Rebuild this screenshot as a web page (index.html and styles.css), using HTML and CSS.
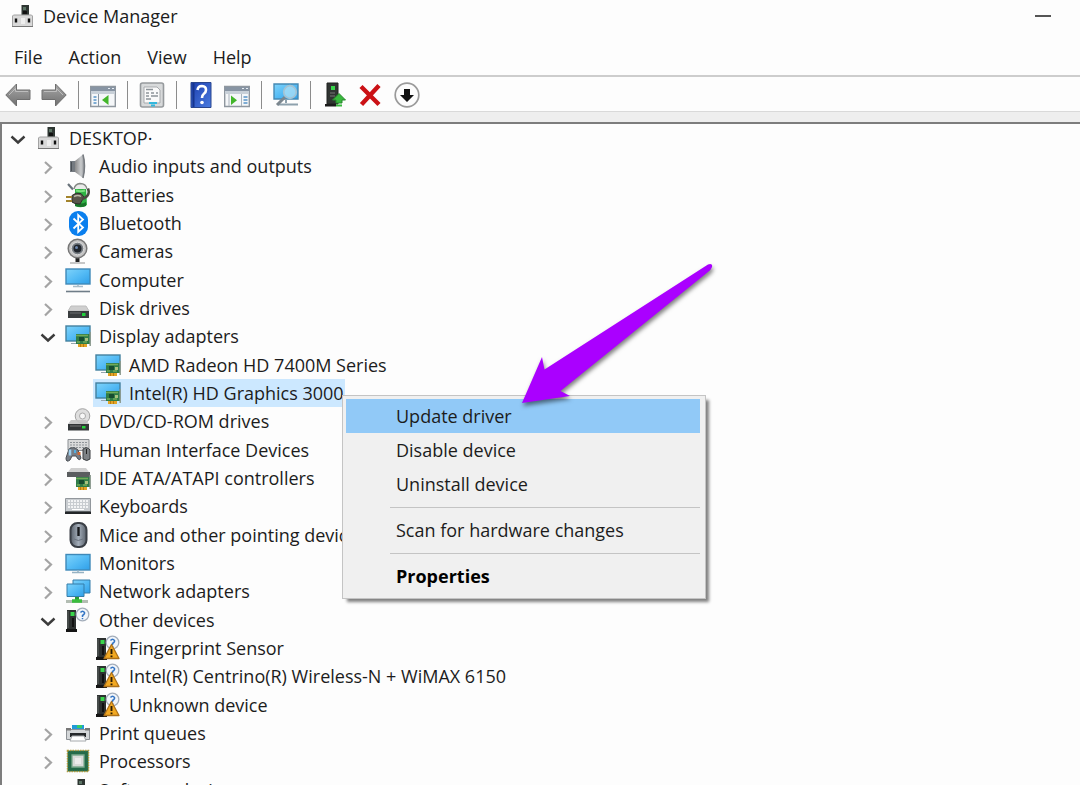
FILE: index.html
```html
<!DOCTYPE html>
<html lang="en">
<head>
<meta charset="utf-8">
<title>Device Manager</title>
<link rel="stylesheet" href="styles.css">
</head>
<body>
<svg class="defs" aria-hidden="true">
  <defs>
    <linearGradient id="g-screen" x1="0" y1="0" x2="1" y2="1"><stop offset="0" stop-color="#7fd3fa"/><stop offset=".5" stop-color="#54bbf5"/><stop offset="1" stop-color="#2f9fe8"/></linearGradient>
    <linearGradient id="g-cone" x1="0" y1="0" x2="1" y2="0"><stop offset="0" stop-color="#8a8a8a"/><stop offset=".6" stop-color="#c9cbcd"/><stop offset="1" stop-color="#85898d"/></linearGradient>
    <linearGradient id="g-arrow" x1="0" y1="0" x2="0" y2="1"><stop offset="0" stop-color="#a8a8a8"/><stop offset="1" stop-color="#6f6f6f"/></linearGradient>
    <linearGradient id="g-help" x1="0" y1="0" x2="1" y2="1"><stop offset="0" stop-color="#1d3fae"/><stop offset="1" stop-color="#4a7be0"/></linearGradient>
    <linearGradient id="g-mouse" x1="0" y1="0" x2="1" y2="0"><stop offset="0" stop-color="#59616b"/><stop offset=".5" stop-color="#a3adb9"/><stop offset="1" stop-color="#59616b"/></linearGradient>

    <symbol id="i-root" viewBox="0 0 26 26">
      <path d="M12.500 2h7.500v12h-7.500z" fill="#2e3632"/><path d="M14 4h3v3h-3z" fill="#5c7465"/><path d="M14 8h4v3h-4z" fill="#111"/>
      <path d="M3.500 13l1-1h18l1 1v10.500h-20z" fill="#d9d9d9" stroke="#a3a3a3"/>
      <path d="M3 23.500h21" stroke="#777"/>
      <path d="M7 15.500v4M20 15.500v4" stroke="#111" stroke-width="2.400"/><path d="M12 15h4v6h-4z" fill="#eee"/>
    </symbol>
    <symbol id="i-audio" viewBox="0 0 26 26">
      <path d="M5 8h5v11H5z" fill="#747a80"/><path d="M6.500 9v9" stroke="#4b5157"/>
      <path d="M10 8l8-6.500q4 11.500 0 23.500L10 19z" fill="url(#g-cone)"/><path d="M18 1.500q3 11.500 0 23.500" fill="none" stroke="#777b80" stroke-width="1.500"/>
    </symbol>
    <symbol id="i-battery" viewBox="0 0 26 26">
      <path d="M10 5q5-4 11 0l1 18q-5 4-12 1z" fill="#2fb344"/><path d="M10 20q6 3 11 0v4q-5 2-11 0z" fill="#187529"/>
      <path d="M9 7q1-5 6-5.500Q21 1.500 22 7" fill="#e9ebe9" stroke="#858985" stroke-width="1.300"/><path d="M11 8.500q5 1.500 9 0" stroke="#7be07d" stroke-width="2" fill="none"/>
      <path d="M3 2l5 5.500" stroke="#69727a" stroke-width="2.200"/>
      <path d="M7 13.500q4-3.500 9-2l3 3.500-4 7q-6 0-8-2z" fill="#59564b" stroke="#2f302b"/><path d="M17 17q9-3 6-10.500" fill="none" stroke="#4b4a42" stroke-width="2.500"/>
      <path d="M9 14.500q4-2 7 0" stroke="#bbb9a8" fill="none" stroke-width="1.500"/>
      <path d="M1 15h6M1 19h6" stroke="#a3842c" stroke-width="2.200"/>
    </symbol>
    <symbol id="i-bluetooth" viewBox="0 0 26 26">
      <rect x="4" y="1" width="19" height="25" rx="9" fill="#0a7fee"/>
      <path d="M8.500 8.500l9.500 9-4.800 4.500V5l4.800 4.500-9.500 9" fill="none" stroke="#fff" stroke-width="1.800"/>
    </symbol>
    <symbol id="i-camera" viewBox="0 0 26 26">
      <path d="M5 25h15" stroke="#b5b5b5" stroke-width="1.500"/><path d="M12.500 19v5" stroke="#222" stroke-width="4"/>
      <circle cx="12.500" cy="10.500" r="9.300" fill="#c4c4c4" stroke="#777" stroke-width="1.500"/><circle cx="12.500" cy="10.500" r="6.300" fill="#777d83" stroke="#dcdcdc"/>
      <circle cx="12.500" cy="10.500" r="4" fill="#20252c"/><circle cx="11.500" cy="9.500" r="1.500" fill="#6c86ac"/>
    </symbol>
    <symbol id="i-computer" viewBox="0 0 26 26">
      <rect x="1" y="2" width="24" height="15" fill="url(#g-screen)" stroke="#3f89b8" stroke-width="1.400"/>
      <path d="M13 18v2M8 19.500h10" stroke="#a9bdc9" stroke-width="1.600"/><path d="M1 24.500h24" stroke="#6f7d88" stroke-width="1.600"/>
    </symbol>
    <symbol id="i-disk" viewBox="0 0 26 26">
      <path d="M6 11h15l3 5H3z" fill="#cfcfcf" stroke="#bdbdbd"/><path d="M3 16h21v7H3z" fill="#3a3d3f"/><path d="M5 18h11" stroke="#6b6f70"/><path d="M17 18h3.500v3H17z" fill="#21d13c"/>
    </symbol>
    <symbol id="i-card" viewBox="0 0 26 26">
      <path d="M11 10h14v10H11z" fill="#2f7d48"/><path d="M25.200 8v14" stroke="#8c9a8f" stroke-width="1.500"/>
      <path d="M11 11.500h12M12 18h3M18 18h4" stroke="#73a957" stroke-width="1.400"/><path d="M14 13h5v4h-5z" fill="#174c30"/><path d="M20 14h3v3h-3z" fill="#a8c17d"/>
      <path d="M13 20h9v3h-9z" fill="#e3a526"/><path d="M15.500 20v3M18.500 20v3" stroke="#b67b13"/>
    </symbol>
    <symbol id="i-display" viewBox="0 0 26 26">
      <rect x="1" y="3" width="24" height="15" fill="url(#g-screen)" stroke="#43809f" stroke-width="1.400"/><path d="M6 20.500h7" stroke="#97a6af"/><use href="#i-card" y="1" width="26" height="26"/>
    </symbol>
    <symbol id="i-dvd" viewBox="0 0 26 26">
      <circle cx="17.500" cy="8" r="7.300" fill="#dedede" stroke="#a2a2a2"/><circle cx="17.500" cy="8" r="3" fill="#f7f7f7" stroke="#aaa"/>
      <path d="M6 12h15l3 4H3z" fill="#c3c3c3" opacity=".9"/><path d="M3 16h21v6.500H3z" fill="#333638"/><path d="M5 18h11" stroke="#777"/><path d="M17 18h3.500v2.500H17z" fill="#25d23b"/>
    </symbol>
    <symbol id="i-hid" viewBox="0 0 26 26">
      <path d="M3 2.500h21v11H3z" fill="#d9dadb" stroke="#8b8f93"/><path d="M5 5.500h17M5 8h17M5 10.500h17" stroke="#8f9499" stroke-dasharray="2 1"/>
      <path d="M4 12q5-3 9 1l3 8q-1 3-3 1l-2-3H7l-2 4q-4 3-4-2z" fill="#777e87" stroke="#4a4f55"/>
      <path d="M5 12.500v6" stroke="#9fd0ef" stroke-width="2.500"/><path d="M10 13v3" stroke="#54aee0" stroke-width="2"/>
      <path d="M12.500 15h3v3h-3z" fill="#cd6935"/><path d="M18 12q4-3 7 1v9q-3 3-7 0z" fill="#7d8185" stroke="#3a3d40"/><path d="M21.500 12v5" stroke="#222"/>
    </symbol>
    <symbol id="i-ide" viewBox="0 0 26 26">
      <path d="M6 3h15l3 4H3z" fill="#cfcfcf"/><path d="M2 7h23v5H2z" fill="#5a5d5f"/><use href="#i-card" y="2" width="26" height="26"/>
    </symbol>
    <symbol id="i-keyboard" viewBox="0 0 26 26">
      <path d="M.5 5.500h25v13H.5z" fill="#c8ccd0" stroke="#92979c"/><path d="M3 8h20M3 11h20M3 14h20" stroke="#fff" stroke-width="1.600" stroke-dasharray="2 1"/><path d="M7 16.500h12" stroke="#fff"/>
      <path d="M0 18.500h26v2.500H0z" fill="#232629"/>
    </symbol>
    <symbol id="i-mouse" viewBox="0 0 26 26">
      <rect x="5.500" y="1" width="16" height="24" rx="7" fill="url(#g-mouse)" stroke="#3a3f46" stroke-width="2"/><path d="M13.500 5v9" stroke="#17191c" stroke-width="2.400"/><path d="M9 17q4 3 9 0" fill="none" stroke="#6b7480"/>
    </symbol>
    <symbol id="i-monitor" viewBox="0 0 26 26">
      <rect x="1" y="4.500" width="24" height="15.500" fill="url(#g-screen)" stroke="#3f89b8" stroke-width="1.400"/><path d="M13 20v2M7 22.500h12" stroke="#96b2c3" stroke-width="1.500"/>
    </symbol>
    <symbol id="i-network" viewBox="0 0 26 26">
      <path d="M8 2h17v13H8z" fill="url(#g-screen)" stroke="#347da9"/><path d="M2 6h17v12.500H2z" fill="url(#g-screen)" stroke="#347da9"/>
      <path d="M12 19v3" stroke="#2a9b35" stroke-width="4"/><path d="M1 23.500h22" stroke="#b3bdb3" stroke-width="3"/><path d="M7 23h10" stroke="#39bd3d" stroke-width="3.500"/>
    </symbol>
    <symbol id="i-tower" viewBox="0 0 26 26">
      <path d="M2 3h9v19H2z" fill="#2d3130"/><path d="M3 4v17" stroke="#636866"/><path d="M5.500 5h4v4h-4z" fill="#39d64c"/><path d="M7 11h2v9H7z" fill="#111"/><path d="M1 22h11v3H1z" fill="#151515"/>
    </symbol>
    <symbol id="i-query" viewBox="0 0 26 26">
      <circle cx="17.500" cy="7.500" r="6.300" fill="#f1f5fa" stroke="#a3adba" stroke-width="1.300"/><path d="M15.500 5.500q2-2.500 4 0 .5 1.500-2 3V10M17.500 11v1.200" fill="none" stroke="#3475c4" stroke-width="1.500"/>
    </symbol>
    <symbol id="i-other" viewBox="0 0 26 26"><use href="#i-tower" width="26" height="26"/><use href="#i-query" width="26" height="26"/></symbol>
    <symbol id="i-warning" viewBox="0 0 26 26">
      <use href="#i-tower" width="26" height="26"/><use href="#i-query" width="26" height="26"/>
      <path d="M16.500 9.500L24 23.500H9z" fill="#f2a922" stroke="#ad711a" stroke-width="1.300" stroke-linejoin="round"/><path d="M16.500 14v5M16.500 20.500v1.700" stroke="#2a1c05" stroke-width="1.900"/>
    </symbol>
    <symbol id="i-printer" viewBox="0 0 26 26">
      <path d="M7 5h12v5H7z" fill="#219ad8"/><path d="M12 5h5v3h-5z" fill="#35cd66"/><path d="M1.500 9.500h23v10h-23z" fill="#d3d6d8" stroke="#8c9195"/><path d="M1 8h5v2.500H1zM20 8h5v2.500h-5z" fill="#777"/>
      <path d="M5 13h16v4H5z" fill="#25282a"/><path d="M7 16h12l2 5H5z" fill="#fff" stroke="#a5a9ac"/>
    </symbol>
    <symbol id="i-cpu" viewBox="0 0 26 26">
      <rect x="2.500" y="2.500" width="21" height="21" fill="#246b49" stroke="#b09a3d" stroke-width="1.500" stroke-dasharray="1.500 1"/><rect x="3.500" y="3.500" width="19" height="19" fill="#246b49"/>
      <path d="M7 7h12v12H7z" fill="#d8dbd8" stroke="#7caa8e" stroke-width="1.300"/><path d="M10 10h6v6h-6z" fill="#ececec"/>
    </symbol>

    <symbol id="t-back" viewBox="0 0 26 26"><path d="M.800 13L11.500 2v6h13.500v9.500H11.500V24z" fill="url(#g-arrow)" stroke="#6e6e6e" stroke-linejoin="round"/><path d="M4 13l6.500-6.500v3H23" fill="none" stroke="#bdbdbd"/></symbol>
    <symbol id="t-frame" viewBox="0 0 26 26">
      <path d="M.7 4.500h24.600v20H.7z" fill="#f5f7f9" stroke="#8f979f" stroke-width="1.400"/><path d="M1 5h24v4H1z" fill="#8794a3"/><path d="M18 6.500h2M22 6.500h2" stroke="#e7edf3"/><path d="M1 9h24v3H1z" fill="#c8d0d8"/>
    </symbol>
    <symbol id="t-console" viewBox="0 0 26 26">
      <use href="#t-frame" width="26" height="26"/><path d="M8.500 12v12" stroke="#8995a1"/><path d="M3.500 15h3M3.500 18h3M3.500 21h3" stroke="#5794c7" stroke-width="1.700"/><path d="M18.500 13v10L12 18z" fill="#43b62b"/>
    </symbol>
    <symbol id="t-action" viewBox="0 0 26 26">
      <use href="#t-frame" width="26" height="26"/><path d="M5 12v12M17.500 12v12" stroke="#aab3bc"/><path d="M19.500 15h4M19.500 18h4M19.500 21h4" stroke="#5794c7" stroke-width="1.600"/><path d="M7 13.500v9.500l6-4.700z" fill="#43b62b"/>
    </symbol>
    <symbol id="t-properties" viewBox="0 0 26 26">
      <rect x="1.500" y="1" width="23" height="24" rx="2" fill="#d8dadb" stroke="#969a9d" stroke-width="1.600"/><path d="M5 5h13l3 3v13H5z" fill="#fafafa" stroke="#a7aaad"/><path d="M7 7.500h7M7 11h3M12 11h3M17 11h2M7 14h3M12 14h7M7 17h5" stroke="#8d9499" stroke-width="1.300"/><path d="M10 21h8M12 23.500h4" stroke="#35b7dc" stroke-width="2"/>
    </symbol>
    <symbol id="t-help" viewBox="0 0 26 26">
      <path d="M3 .5h20v25H3z" fill="url(#g-help)" stroke="#2a468e"/><path d="M5.500 1v24" stroke="#16358f" stroke-width="2"/><path d="M9.500 8q.5-4 4.500-4 4 .2 4 4 0 2.500-2.300 4-1.700 1.200-1.700 4" fill="none" stroke="#fff" stroke-width="2.600"/><circle cx="14" cy="20.500" r="1.800" fill="#fff"/>
    </symbol>
    <symbol id="t-scan" viewBox="0 0 26 26">
      <path d="M1 2h24v15H1z" fill="url(#g-screen)" stroke="#4689b3" stroke-width="1.400"/><path d="M13 17v4M5 22.500h20" stroke="#8ea1ad" stroke-width="2"/><path d="M12 15l-8 8" stroke="#7c878f" stroke-width="3"/><circle cx="17" cy="10" r="6.300" fill="#a9def6" fill-opacity=".8" stroke="#a3c3d4" stroke-width="1.700"/>
    </symbol>
    <symbol id="t-update" viewBox="0 0 26 26">
      <path d="M5 1h11v21H5z" fill="#303432" stroke="#202321"/><path d="M9 4h4v4H9z" fill="#39d64c"/><path d="M8 11h5M8 14h5" stroke="#777"/><path d="M3 22h11v2.500H3z" fill="#1b1b1b"/>
      <path d="M17 11.500l6.500 6.500h-3.500v3h-6v-3h-3.500z" fill="#38b83d" stroke="#27892c"/><path d="M14 23.500h6" stroke="#38b83d" stroke-width="2"/>
    </symbol>
    <symbol id="t-remove" viewBox="0 0 26 26"><path d="M3 4.500l18 18M21 3.500L3.500 22.500" stroke="#cb1115" stroke-width="4.400"/></symbol>
    <symbol id="t-disable" viewBox="0 0 26 26"><circle cx="13" cy="13" r="11.800" fill="#fcfcfc" stroke="#9a9a9a" stroke-width="1.700"/><path d="M10 7h6v6h4l-7 7-7-7h4z" fill="#111"/></symbol>
    <symbol id="c-closed" viewBox="0 0 26 26"><path d="M10 9l6 5.500-6 6" fill="none" stroke="#a4a4a4" stroke-width="2.200"/></symbol>
    <symbol id="c-open" viewBox="0 0 26 26"><path d="M6.500 11.500l6.500 6 6.500-6" fill="none" stroke="#3c3c3c" stroke-width="2.400"/></symbol>
  </defs>
</svg>

<div class="window">
  <header class="titlebar">
    <svg class="icon"><use href="#i-root"/></svg>
    <h1 class="title">Device Manager</h1>
    <button class="minimize" type="button" aria-label="Minimize"></button>
  </header>

  <nav class="menubar" aria-label="Menu bar">
    <button type="button">File</button>
    <button type="button">Action</button>
    <button type="button">View</button>
    <button type="button">Help</button>
  </nav>

  <div class="toolbar" role="toolbar" aria-label="Tools">
    <button type="button" aria-label="Back"><svg class="icon"><use href="#t-back"/></svg></button>
    <button type="button" aria-label="Forward"><svg class="icon flipped"><use href="#t-back"/></svg></button>
    <span class="divider"></span>
    <button type="button" aria-label="Show console tree"><svg class="icon"><use href="#t-console"/></svg></button>
    <span class="divider"></span>
    <button type="button" aria-label="Properties"><svg class="icon"><use href="#t-properties"/></svg></button>
    <span class="divider"></span>
    <button type="button" aria-label="Help"><svg class="icon"><use href="#t-help"/></svg></button>
    <button type="button" aria-label="Show action pane"><svg class="icon"><use href="#t-action"/></svg></button>
    <span class="divider"></span>
    <button type="button" aria-label="Scan for hardware changes"><svg class="icon"><use href="#t-scan"/></svg></button>
    <span class="divider"></span>
    <button type="button" aria-label="Update driver"><svg class="icon"><use href="#t-update"/></svg></button>
    <button type="button" aria-label="Uninstall device"><svg class="icon"><use href="#t-remove"/></svg></button>
    <button type="button" aria-label="Disable device"><svg class="icon"><use href="#t-disable"/></svg></button>
  </div>

  <main class="pane">
    <ul class="tree" role="tree" aria-label="Devices">
      <li class="node root" role="treeitem" aria-level="1" aria-expanded="true"><svg class="icon"><use href="#c-open"/></svg><span class="entry"><svg class="icon"><use href="#i-root"/></svg>DESKTOP·</span></li>
      <li class="node" role="treeitem" aria-level="2" aria-expanded="false"><svg class="icon"><use href="#c-closed"/></svg><span class="entry"><svg class="icon"><use href="#i-audio"/></svg>Audio inputs and outputs</span></li>
      <li class="node" role="treeitem" aria-level="2" aria-expanded="false"><svg class="icon"><use href="#c-closed"/></svg><span class="entry"><svg class="icon"><use href="#i-battery"/></svg>Batteries</span></li>
      <li class="node" role="treeitem" aria-level="2" aria-expanded="false"><svg class="icon"><use href="#c-closed"/></svg><span class="entry"><svg class="icon"><use href="#i-bluetooth"/></svg>Bluetooth</span></li>
      <li class="node" role="treeitem" aria-level="2" aria-expanded="false"><svg class="icon"><use href="#c-closed"/></svg><span class="entry"><svg class="icon"><use href="#i-camera"/></svg>Cameras</span></li>
      <li class="node" role="treeitem" aria-level="2" aria-expanded="false"><svg class="icon"><use href="#c-closed"/></svg><span class="entry"><svg class="icon"><use href="#i-computer"/></svg>Computer</span></li>
      <li class="node" role="treeitem" aria-level="2" aria-expanded="false"><svg class="icon"><use href="#c-closed"/></svg><span class="entry"><svg class="icon"><use href="#i-disk"/></svg>Disk drives</span></li>
      <li class="node" role="treeitem" aria-level="2" aria-expanded="true"><svg class="icon"><use href="#c-open"/></svg><span class="entry"><svg class="icon"><use href="#i-display"/></svg>Display adapters</span></li>
      <li class="node leaf" role="treeitem" aria-level="3"><span class="entry"><svg class="icon"><use href="#i-display"/></svg>AMD Radeon HD 7400M Series</span></li>
      <li class="node leaf" role="treeitem" aria-level="3" aria-selected="true"><span class="entry selected"><svg class="icon"><use href="#i-display"/></svg>Intel(R) HD Graphics 3000</span></li>
      <li class="node" role="treeitem" aria-level="2" aria-expanded="false"><svg class="icon"><use href="#c-closed"/></svg><span class="entry"><svg class="icon"><use href="#i-dvd"/></svg>DVD/CD-ROM drives</span></li>
      <li class="node" role="treeitem" aria-level="2" aria-expanded="false"><svg class="icon"><use href="#c-closed"/></svg><span class="entry"><svg class="icon"><use href="#i-hid"/></svg>Human Interface Devices</span></li>
      <li class="node" role="treeitem" aria-level="2" aria-expanded="false"><svg class="icon"><use href="#c-closed"/></svg><span class="entry"><svg class="icon"><use href="#i-ide"/></svg>IDE ATA/ATAPI controllers</span></li>
      <li class="node" role="treeitem" aria-level="2" aria-expanded="false"><svg class="icon"><use href="#c-closed"/></svg><span class="entry"><svg class="icon"><use href="#i-keyboard"/></svg>Keyboards</span></li>
      <li class="node" role="treeitem" aria-level="2" aria-expanded="false"><svg class="icon"><use href="#c-closed"/></svg><span class="entry"><svg class="icon"><use href="#i-mouse"/></svg>Mice and other pointing devices</span></li>
      <li class="node" role="treeitem" aria-level="2" aria-expanded="false"><svg class="icon"><use href="#c-closed"/></svg><span class="entry"><svg class="icon"><use href="#i-monitor"/></svg>Monitors</span></li>
      <li class="node" role="treeitem" aria-level="2" aria-expanded="false"><svg class="icon"><use href="#c-closed"/></svg><span class="entry"><svg class="icon"><use href="#i-network"/></svg>Network adapters</span></li>
      <li class="node" role="treeitem" aria-level="2" aria-expanded="true"><svg class="icon"><use href="#c-open"/></svg><span class="entry"><svg class="icon"><use href="#i-other"/></svg>Other devices</span></li>
      <li class="node leaf" role="treeitem" aria-level="3"><span class="entry"><svg class="icon"><use href="#i-warning"/></svg>Fingerprint Sensor</span></li>
      <li class="node leaf" role="treeitem" aria-level="3"><span class="entry"><svg class="icon"><use href="#i-warning"/></svg>Intel(R) Centrino(R) Wireless-N + WiMAX 6150</span></li>
      <li class="node leaf" role="treeitem" aria-level="3"><span class="entry"><svg class="icon"><use href="#i-warning"/></svg>Unknown device</span></li>
      <li class="node" role="treeitem" aria-level="2" aria-expanded="false"><svg class="icon"><use href="#c-closed"/></svg><span class="entry"><svg class="icon"><use href="#i-printer"/></svg>Print queues</span></li>
      <li class="node" role="treeitem" aria-level="2" aria-expanded="false"><svg class="icon"><use href="#c-closed"/></svg><span class="entry"><svg class="icon"><use href="#i-cpu"/></svg>Processors</span></li>
      <li class="node" role="treeitem" aria-level="2" aria-expanded="false"><svg class="icon"><use href="#c-closed"/></svg><span class="entry"><svg class="icon"><use href="#i-root"/></svg>Software devices</span></li>
    </ul>

    <div class="context-menu" role="menu">
      <button class="active" type="button" role="menuitem">Update driver</button>
      <button type="button" role="menuitem">Disable device</button>
      <button type="button" role="menuitem">Uninstall device</button>
      <hr>
      <button type="button" role="menuitem">Scan for hardware changes</button>
      <hr>
      <button class="default" type="button" role="menuitem">Properties</button>
    </div>

    <svg class="pointer" viewBox="0 0 200 150" aria-hidden="true">
      <path d="M7 143L27 97l2.500 12.500L193 4.500q5-1.500 4 2.500-1 3-4 5L45.500 131 55 136z" fill="#aa00ff"/>
    </svg>
  </main>
</div>
</body>
</html>
```

FILE: styles.css
```css
* {
  box-sizing: border-box;
}

body {
  margin: 0;
  background: #fdfdfd;
  color: #1c1c1c;
  font: 18px/28px "Open Sans", "Noto Sans", sans-serif;
}

button {
  margin: 0;
  padding: 0;
  border: 0;
  background: none;
  color: inherit;
  font: inherit;
}

.defs {
  position: absolute;
  width: 0;
  height: 0;
}

.window {
  display: flex;
  flex-direction: column;
  height: 100vh;
  overflow: hidden;
}

.icon {
  flex: none;
  display: block;
  width: 26px;
  height: 26px;
}

.flipped {
  transform: scaleX(-1);
}

.titlebar {
  display: flex;
  align-items: center;
  gap: 8px;
  padding: 2px 28px 6px 9px;
}

.title {
  flex: 1;
  margin: 0;
  font-size: 18px;
  font-weight: 400;
}

.minimize {
  width: 18px;
  height: 24px;
  background: linear-gradient(#555, #555) center / 16px 2px no-repeat;
}

.menubar {
  display: flex;
  gap: 26px;
  padding: 7px 14px 4px;
  border-bottom: 2px solid #cdcdcd;
}

.toolbar {
  display: flex;
  align-items: center;
  gap: 10px;
  padding: 4px 5px 2px;
  border-bottom: 1px solid #d9d9d9;
}

.divider {
  width: 1px;
  height: 28px;
  margin: 0 1px;
  background: #8c8c8c;
}

.pane {
  position: relative;
  flex: 1;
  min-height: 0;
  border-top: 10px solid #eeeeee;
}

.tree {
  display: grid;
  grid-auto-rows: 28px 28px 29px;
  height: 100%;
  margin: 0;
  padding: 0;
  overflow: hidden;
  border: solid #7d7d7d;
  border-width: 2px 0 0 2px;
  list-style: none;
}

.node {
  display: flex;
  align-items: center;
  gap: 2px;
  padding-left: 33px;
}

.root {
  padding-left: 3px;
}

.leaf {
  padding-left: 91px;
}

.entry {
  display: flex;
  align-items: center;
  gap: 8px;
  padding: 0 1px 0 2px;
  white-space: nowrap;
}

.selected {
  background: #cce8ff;
}

.context-menu {
  position: absolute;
  top: 273px;
  left: 342px;
  width: 364px;
  padding: 3px 5px 5px 3px;
  border: 1px solid #c4c4c4;
  background: #f0f0f0;
  box-shadow: 4px 4px 3px -1px #808080;
}

.context-menu button {
  display: block;
  width: 100%;
  padding: 3px 0 3px 50px;
  text-align: left;
}

.context-menu .active {
  background: #91c9f7;
}

.context-menu .default {
  color: #000;
  font-weight: 700;
}

.context-menu hr {
  height: 1px;
  margin: 6px 0 5px 44px;
  border: 0;
  background: #c4c4c4;
}

.pointer {
  position: absolute;
  top: 138px;
  left: 515px;
  width: 200px;
  height: 150px;
  filter: drop-shadow(1px 3px 2px #00000080);
}
```
